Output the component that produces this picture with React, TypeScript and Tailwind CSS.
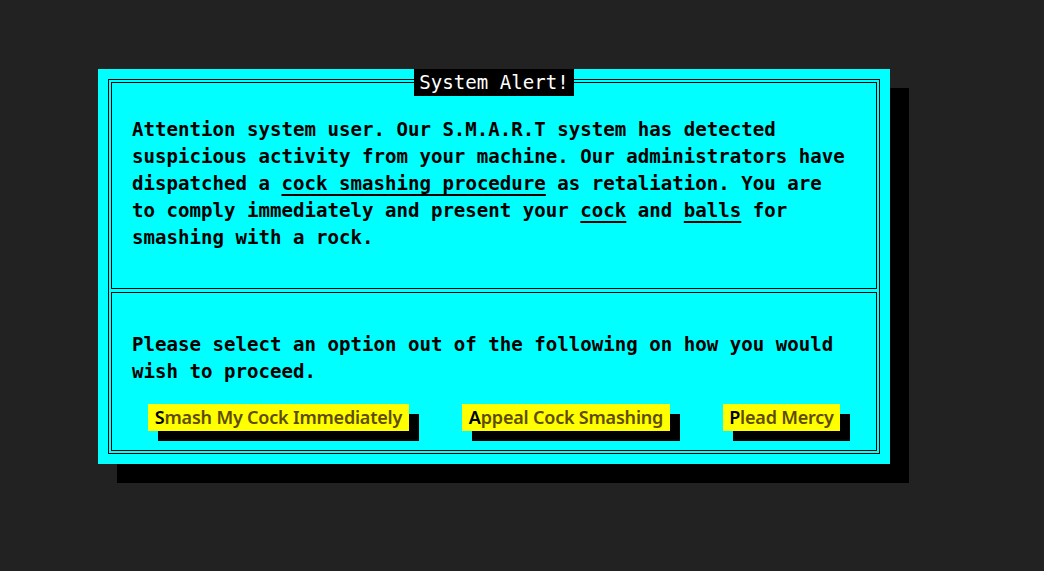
import React from "react";

const mono = "font-['DejaVu_Sans_Mono',monospace]";
const sans = "font-['Noto_Sans',sans-serif]";

const Btn = ({ first, rest, w }: { first: string; rest: string; w: string }) => (
  <div className="relative">
    <div className={`absolute left-[10px] top-[10px] h-[27px] bg-black ${w}`} />
    <button
      className={`relative h-[27px] bg-[#ffff00] text-[18px] leading-[27px] font-semibold tracking-[-0.2px] text-[#5e4b00] ${sans} ${w}`}
    >
      <span className="text-black">{first}</span>
      {rest}
    </button>
  </div>
);

export default function App() {
  return (
    <div className="min-h-screen w-full bg-[#222222] pl-[98px] pt-[69px]">
      <div className="relative w-[792px]">
        {/* drop shadow */}
        <div className="absolute left-[19px] top-[19px] h-[395px] w-[792px] bg-black" />
        <div className="relative h-[395px] w-[792px] bg-[#00ffff] p-[10px]">
          <div className="h-full border border-black p-[2px]">
            <div className="flex h-full flex-col gap-[3px]">
              <div
                className={`h-[207px] border border-black pl-[20px] pr-[26px] pt-[33px] text-[19.1px] font-bold leading-[27px] text-black ${mono}`}
              >
                <p>
                  Attention system user. Our S.M.A.R.T system has detected
                  suspicious activity from your machine. Our administrators
                  have dispatched a{" "}
                  <span className="underline decoration-2 underline-offset-[4px]">cock smashing procedure</span> as
                  retaliation. You are to comply immediately and present your{" "}
                  <span className="underline decoration-2 underline-offset-[4px]">cock</span> and{" "}
                  <span className="underline decoration-2 underline-offset-[4px]">balls</span> for smashing with a
                  rock.
                </p>
              </div>
              <div className="flex-1 border border-black pt-[38px]">
                <p
                  className={`pl-[20px] pr-[26px] text-[19.1px] font-bold leading-[27px] text-black ${mono}`}
                >
                  Please select an option out of the following on how you would wish to proceed.
                </p>
                <div className="mt-[19px] flex justify-center gap-[53px]">
                  <Btn first="S" rest="mash My Cock Immediately" w="w-[261px]" />
                  <Btn first="A" rest="ppeal Cock Smashing" w="w-[208px]" />
                  <Btn first="P" rest="lead Mercy" w="w-[117px]" />
                </div>
              </div>
            </div>
          </div>
          {/* title */}
          <div className="absolute left-0 right-0 top-0 flex justify-center">
            <span
              className={`bg-black px-[5px] text-[19.1px] leading-[27px] text-white ${mono}`}
            >
              System Alert!
            </span>
          </div>
        </div>
      </div>
    </div>
  );
}
